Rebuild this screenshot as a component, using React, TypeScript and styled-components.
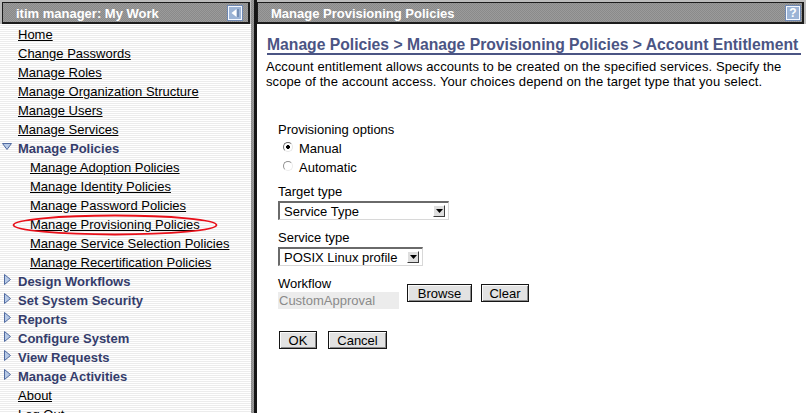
import React from "react";
import styled, { createGlobalStyle } from "styled-components";

const GlobalStyle = createGlobalStyle`
  html, body { margin: 0; padding: 0; }
  body {
    font-family: "Liberation Sans", Arial, sans-serif;
    font-size: 13px;
    color: #000;
    background: #fff;
  }
`;

const dither = `repeating-conic-gradient(#8a8a8a 0 25%, #9b9b9b 0 50%) 0 0 / 2px 2px`;

const Page = styled.div`
  display: flex;
  width: 806px;
  height: 413px;
  overflow: hidden;
`;

const Sidebar = styled.aside`
  width: 251px;
  flex: none;
  display: flex;
  flex-direction: column;
  background: repeating-linear-gradient(to bottom, #ffffff 0 1px, #ececec 1px 2px);
`;

const Splitter = styled.div`
  width: 3px;
  flex: none;
  background: ${dither};
  border-right: 3px solid #151515;
`;

const Main = styled.main`
  flex: 1;
  min-width: 0;
  display: flex;
  flex-direction: column;
  background: #fff;
`;

const HeaderFrame = styled.div<{ $side: "left" | "right" }>`
  flex: none;
  height: 24px;
  box-sizing: border-box;
  padding: 2px ${(p) => (p.$side === "left" ? "1px" : "2px")} 0 ${(p) => (p.$side === "left" ? "2px" : "0")};
  background: #bcbcbc;
`;

const HeaderBar = styled.div`
  height: 22px;
  box-sizing: border-box;
  border-style: solid;
  border-color: #1c1c1c;
  border-width: 1px 2px 2px 1px;
  background: ${dither};
  display: flex;
  align-items: center;
  justify-content: space-between;
  padding: 0 0 0 13px;
`;

const HeaderTitle = styled.span`
  color: #fff;
  font-weight: bold;
  font-size: 13px;
  white-space: nowrap;
  padding-top: 1px;
`;

const IconBox = styled.span<{ $mr: number }>`
  width: 14px;
  height: 14px;
  box-sizing: border-box;
  margin-right: ${(p) => p.$mr}px;
  background: #9cb4d6;
  border: 1px solid #f4f8ff;
  outline: 1px solid #6f88b2;
  display: flex;
  align-items: center;
  justify-content: center;
  color: #fff;
  font-weight: bold;
  font-size: 12px;
  line-height: 12px;
`;

const NavList = styled.ul`
  list-style: none;
  margin: 0;
  padding: 1px 0 0 0;
`;

const NavRow = styled.li<{ $indent: number }>`
  position: relative;
  height: 19px;
  display: flex;
  align-items: center;
  padding-left: ${(p) => p.$indent}px;
  white-space: nowrap;
`;

const NavLink = styled.a`
  color: #000;
  text-decoration: underline;
  font-size: 13px;
  cursor: pointer;
`;

const NavHeading = styled.span`
  color: #343c6b;
  font-weight: bold;
  font-size: 13px;
`;

const TwistySlot = styled.span`
  width: 18px;
  height: 19px;
  flex: none;
  position: relative;
  display: block;
`;

const Twisty = styled.svg<{ $x: number; $y: number }>`
  position: absolute;
  left: ${(p) => p.$x}px;
  top: ${(p) => p.$y}px;
`;

const Marker = styled.svg`
  position: absolute;
  left: 12px;
  top: -1px;
  pointer-events: none;
`;

const Content = styled.div`
  padding: 13px 5px 0 10px;
`;

const PageTitle = styled.h1`
  margin: 0;
  font-size: 15.7px;
  line-height: 16px;
  font-weight: bold;
  color: #4b5584;
  border-bottom: 2px solid #4b5584;
  white-space: nowrap;
`;

const Intro = styled.p`
  margin: 4px 0 0 -1px;
  font-size: 13px;
  line-height: 15px;
  letter-spacing: 0.1px;
`;

const Form = styled.form`
  margin: 31px 0 0 11px;
  display: flex;
  flex-direction: column;
`;

const Label = styled.div<{ $h?: number }>`
  height: ${(p) => p.$h ?? 19}px;
  line-height: ${(p) => p.$h ?? 19}px;
  font-size: 13px;
`;

const RadioRow = styled.label`
  height: 19px;
  display: flex;
  align-items: center;
  padding-left: 5px;
  gap: 6px;
`;

const RadioDot = styled.span<{ $on: boolean }>`
  width: 10px;
  height: 10px;
  box-sizing: border-box;
  border-radius: 50%;
  border: 1px solid;
  border-color: #6c6c6c #e6e6e6 #e6e6e6 #6c6c6c;
  background: ${(p) => (p.$on ? "radial-gradient(circle, #000 0 1.6px, #fff 2.2px)" : "#fff")};
  opacity: ${(p) => (p.$on ? 1 : 0.75)};
  margin-top: -3px;
`;

const Field = styled.div<{ $mt: number }>`
  margin-top: ${(p) => p.$mt}px;
  display: flex;
  flex-direction: column;
`;

const SelectBox = styled.div<{ $w: number }>`
  width: ${(p) => p.$w}px;
  height: 19px;
  box-sizing: border-box;
  display: flex;
  align-items: center;
  justify-content: space-between;
  border-style: solid;
  border-width: 2px 1px 1px 2px;
  border-color: #6a6a6a #d8d8d8 #d8d8d8 #6a6a6a;
  background: #fff;
  padding: 0 3px 0 4px;
  font-size: 13px;
`;

const SelectArrow = styled.span`
  width: 12px;
  height: 12px;
  box-sizing: border-box;
  border: 1px solid;
  border-color: #ffffff #3c3c3c #3c3c3c #ffffff;
  background: #dedede;
  display: flex;
  align-items: center;
  justify-content: center;
`;

const WorkflowRow = styled.div`
  margin-top: 9px;
  display: flex;
  align-items: flex-start;
`;

const WorkflowField = styled.div`
  display: flex;
  flex-direction: column;
  width: 121px;
`;

const ReadOnlyInput = styled.div`
  height: 17px;
  line-height: 17px;
  background: #ececec;
  color: #8a8a8a;
  padding-left: 1px;
  font-size: 13px;
`;

const ButtonRow = styled.div<{ $mt: number; $ml: number; $gap: number }>`
  display: flex;
  gap: ${(p) => p.$gap}px;
  margin-top: ${(p) => p.$mt}px;
  margin-left: ${(p) => p.$ml}px;
`;

const Button = styled.button<{ $w: number }>`
  width: ${(p) => p.$w}px;
  height: 18px;
  box-sizing: border-box;
  padding: 0;
  border: 1px solid #151515;
  box-shadow: inset 1px 1px 0 #fafafa, inset -1px -1px 0 #8a8a8a;
  background: #e2e2e2;
  color: #000;
  font-family: "Liberation Sans", Arial, sans-serif;
  font-size: 13px;
  line-height: 15px;
  cursor: pointer;
`;

type NavKind = "link" | "sub" | "open" | "closed";
type NavEntry = { label: string; kind: NavKind; marked?: boolean };

const nav: NavEntry[] = [
  { label: "Home", kind: "link" },
  { label: "Change Passwords", kind: "link" },
  { label: "Manage Roles", kind: "link" },
  { label: "Manage Organization Structure", kind: "link" },
  { label: "Manage Users", kind: "link" },
  { label: "Manage Services", kind: "link" },
  { label: "Manage Policies", kind: "open" },
  { label: "Manage Adoption Policies", kind: "sub" },
  { label: "Manage Identity Policies", kind: "sub" },
  { label: "Manage Password Policies", kind: "sub" },
  { label: "Manage Provisioning Policies", kind: "sub", marked: true },
  { label: "Manage Service Selection Policies", kind: "sub" },
  { label: "Manage Recertification Policies", kind: "sub" },
  { label: "Design Workflows", kind: "closed" },
  { label: "Set System Security", kind: "closed" },
  { label: "Reports", kind: "closed" },
  { label: "Configure System", kind: "closed" },
  { label: "View Requests", kind: "closed" },
  { label: "Manage Activities", kind: "closed" },
  { label: "About", kind: "link" },
  { label: "Log Out", kind: "link" },
];

function NavItem({ entry }: { entry: NavEntry }) {
  if (entry.kind === "open" || entry.kind === "closed") {
    const open = entry.kind === "open";
    return (
      <NavRow $indent={0}>
        <TwistySlot>
          {open ? (
            <Twisty $x={2} $y={4} width="10" height="7" viewBox="0 0 10 7">
              <polygon points="0.5,0.5 9.5,0.5 5,6.5" fill="#b6c9e6" stroke="#506aa0" strokeWidth="1" />
            </Twisty>
          ) : (
            <Twisty $x={4} $y={2} width="7" height="11" viewBox="0 0 7 11">
              <polygon points="0.5,0.5 6.5,5.5 0.5,10.5" fill="#b6c9e6" stroke="#506aa0" strokeWidth="1" />
            </Twisty>
          )}
        </TwistySlot>
        <NavHeading>{entry.label}</NavHeading>
      </NavRow>
    );
  }
  return (
    <NavRow $indent={entry.kind === "sub" ? 30 : 18}>
      <NavLink>{entry.label}</NavLink>
      {entry.marked && (
        <Marker width="206" height="22" viewBox="0 0 206 22">
          <ellipse cx="103" cy="11" rx="101.5" ry="9.5" fill="none" stroke="#e8101a" strokeWidth="1.8" />
        </Marker>
      )}
    </NavRow>
  );
}

export default function App() {
  return (
    <>
      <GlobalStyle />
      <Page>
        <Sidebar>
          <HeaderFrame $side="left">
            <HeaderBar>
              <HeaderTitle>itim manager: My Work</HeaderTitle>
              <IconBox $mr={6}>
                <svg width="10" height="10" viewBox="0 0 10 10">
                  <polygon points="6.5,1 6.5,9 1.5,5" fill="#fff" />
                  <rect x="7.5" y="1" width="1" height="8" fill="#4f6a96" />
                </svg>
              </IconBox>
            </HeaderBar>
          </HeaderFrame>
          <NavList>
            {nav.map((e) => (
              <NavItem key={e.label} entry={e} />
            ))}
          </NavList>
        </Sidebar>
        <Splitter />
        <Main>
          <HeaderFrame $side="right">
            <HeaderBar>
              <HeaderTitle>Manage Provisioning Policies</HeaderTitle>
              <IconBox $mr={2}>?</IconBox>
            </HeaderBar>
          </HeaderFrame>
          <Content>
            <PageTitle>Manage Policies &gt; Manage Provisioning Policies &gt; Account Entitlement</PageTitle>
            <Intro>
              Account entitlement allows accounts to be created on the specified services. Specify the
              <br />
              scope of the account access. Your choices depend on the target type that you select.
            </Intro>
            <Form onSubmit={(e) => e.preventDefault()}>
              <Label>Provisioning options</Label>
              <RadioRow>
                <RadioDot $on={true} />
                Manual
              </RadioRow>
              <RadioRow>
                <RadioDot $on={false} />
                Automatic
              </RadioRow>
              <Field $mt={6}>
                <Label $h={18}>Target type</Label>
                <SelectBox $w={171}>
                  <span>Service Type</span>
                  <SelectArrow>
                    <svg width="7" height="4" viewBox="0 0 7 4">
                      <polygon points="0,0 7,0 3.5,4" fill="#000" />
                    </svg>
                  </SelectArrow>
                </SelectBox>
              </Field>
              <Field $mt={9}>
                <Label $h={18}>Service type</Label>
                <SelectBox $w={145}>
                  <span>POSIX Linux profile</span>
                  <SelectArrow>
                    <svg width="7" height="4" viewBox="0 0 7 4">
                      <polygon points="0,0 7,0 3.5,4" fill="#000" />
                    </svg>
                  </SelectArrow>
                </SelectBox>
              </Field>
              <WorkflowRow>
                <WorkflowField>
                  <Label $h={17}>Workflow</Label>
                  <ReadOnlyInput>CustomApproval</ReadOnlyInput>
                </WorkflowField>
                <ButtonRow $mt={9} $ml={8} $gap={9}>
                  <Button type="button" $w={65}>Browse</Button>
                  <Button type="button" $w={48}>Clear</Button>
                </ButtonRow>
              </WorkflowRow>
              <ButtonRow $mt={22} $ml={1} $gap={11}>
                <Button type="submit" $w={38}>OK</Button>
                <Button type="button" $w={59}>Cancel</Button>
              </ButtonRow>
            </Form>
          </Content>
        </Main>
      </Page>
    </>
  );
}
